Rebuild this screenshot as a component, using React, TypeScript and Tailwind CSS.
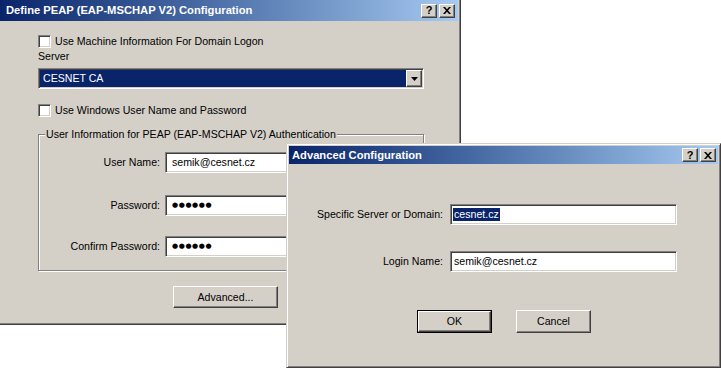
import React from 'react';

const font = "font-['Liberation_Sans',Arial,sans-serif]";
const raised =
  'border border-t-white border-l-white border-r-[#404040] border-b-[#404040] shadow-[inset_-1px_-1px_0_#808080] bg-[#d4d0c8]';
const sunken =
  'border border-t-[#808080] border-l-[#808080] border-r-white border-b-white shadow-[inset_1px_1px_0_#404040,inset_-1px_-1px_0_#d4d0c8]';
const frame =
  'border border-t-[#d4d0c8] border-l-[#d4d0c8] border-r-[#404040] border-b-[#404040] shadow-[inset_1px_1px_0_#fff,inset_-1px_-1px_0_#808080] p-[2px] bg-[#d4d0c8]';

const CaptionButtons: React.FC = () => (
  <div className="flex gap-[2px]">
    <div className={`w-[16px] h-[14px] flex items-center justify-center ${raised}`}>
      <span className="text-[11px] font-bold leading-[11px] text-black">?</span>
    </div>
    <div className={`w-[16px] h-[14px] flex items-center justify-center ${raised}`}>
      <svg width="8" height="7" viewBox="0 0 8 7">
        <path d="M0 0h2l2 2.2L6 0h2L5 3.5 8 7H6L4 4.8 2 7H0l3-3.5z" fill="#000" />
      </svg>
    </div>
  </div>
);

const TitleBar: React.FC<{ title: string; height: string; padL: string; padR: string }> = ({
  title,
  height,
  padL,
  padR,
}) => (
  <div
    className={`flex items-center justify-between bg-gradient-to-r from-[#0a246a] to-[#a6caf0] ${height} ${padL} ${padR}`}
  >
    <span className="text-[11.2px] font-bold text-white leading-[13px]">{title}</span>
    <CaptionButtons />
  </div>
);

const Checkbox: React.FC<{ label: string; className?: string }> = ({ label, className = '' }) => (
  <div className={`flex items-center gap-[4px] h-[13px] ${className}`}>
    <div className={`w-[13px] h-[13px] bg-white ${sunken}`} />
    <span className="leading-[13px]">{label}</span>
  </div>
);

const Dots: React.FC = () => (
  <span className="text-[7px] tracking-[0.6px] leading-[13px] font-['DejaVu_Sans',sans-serif]">●●●●●●</span>
);

const FieldRow: React.FC<{ label: string; className?: string; children: React.ReactNode }> = ({
  label,
  className = '',
  children,
}) => (
  <div className={`flex items-center ${className}`}>
    <div className="w-[121px] text-right leading-[13px]">{label}</div>
    <div className={`ml-[5px] w-[245px] h-[21px] bg-white flex items-center pl-[6px] ${sunken}`}>
      {children}
    </div>
  </div>
);

export default function App() {
  return (
    <div className={`relative w-[721px] h-[369px] overflow-hidden bg-white text-[10.6px] text-black ${font}`}>
      {/* main dialog */}
      <div className={`absolute left-[-3px] top-[-3px] w-[464px] h-[328px] ${frame}`}>
        <TitleBar
          title="Define PEAP (EAP-MSCHAP V2) Configuration"
          height="h-[21px]"
          padL="pl-[6px]"
          padR="pr-[3px]"
        />
        <div className="pl-[38px]">
          <Checkbox label="Use Machine Information For Domain Logon" className="mt-[14px]" />
          <div className="mt-[2px] leading-[13px]">Server</div>
          <div className={`mt-[5px] w-[386px] h-[21px] flex bg-white ${sunken} p-[1px]`}>
            <div className="flex-1 bg-[#0a246a] text-white flex items-center pl-[3px]">CESNET CA</div>
            <div className={`w-[16px] h-full flex items-center justify-center ${raised}`}>
              <svg width="7" height="4" viewBox="0 0 7 4">
                <path d="M0 0h7L3.5 4z" fill="#000" />
              </svg>
            </div>
          </div>
          <Checkbox label="Use Windows User Name and Password" className="mt-[15px]" />

          <div className="relative mt-[17px] w-[386px] border border-[#808080] shadow-[inset_1px_1px_0_#fff,1px_1px_0_#fff] pb-[13px]">
            <span className="absolute left-[6px] top-[-7px] px-[1px] bg-[#d4d0c8] leading-[13px]">
              User Information for PEAP (EAP-MSCHAP V2) Authentication
            </span>
            <FieldRow label="User Name:" className="mt-[17px]">
              <span className="leading-[13px]">semik@cesnet.cz</span>
            </FieldRow>
            <FieldRow label="Password:" className="mt-[22px]">
              <Dots />
            </FieldRow>
            <FieldRow label="Confirm Password:" className="mt-[20px]">
              <Dots />
            </FieldRow>
          </div>

          <button
            className={`mt-[15px] ml-[135px] w-[105px] h-[22px] flex items-center justify-center leading-[13px] ${raised}`}
          >
            Advanced...
          </button>
        </div>
      </div>

      {/* advanced dialog */}
      <div className={`absolute left-[286px] top-[143px] w-[435px] h-[225px] ${frame}`}>
        <TitleBar title="Advanced Configuration" height="h-[18px]" padL="pl-[3px]" padR="pr-[2px]" />
        <div className="flex items-center mt-[40px]">
          <div className="w-[154px] text-right leading-[13px]">Specific Server or Domain:</div>
          <div className={`ml-[7px] w-[227px] h-[21px] bg-white flex items-center pl-[2px] ${sunken}`}>
            <span className="bg-[#0a246a] text-white leading-[13px] px-[1px]">cesnet.cz</span>
          </div>
        </div>
        <div className="flex items-center mt-[26px]">
          <div className="w-[154px] text-right leading-[13px]">Login Name:</div>
          <div className={`ml-[7px] w-[227px] h-[21px] bg-white flex items-center pl-[3px] ${sunken}`}>
            <span className="leading-[13px]">semik@cesnet.cz</span>
          </div>
        </div>
        <div className="flex mt-[38px] ml-[128px] gap-[24px]">
          <div className="w-[75px] h-[23px] border border-black">
            <button className={`w-full h-full flex items-center justify-center leading-[13px] ${raised}`}>OK</button>
          </div>
          <button className={`w-[75px] h-[23px] flex items-center justify-center leading-[13px] ${raised}`}>
            Cancel
          </button>
        </div>
      </div>
    </div>
  );
}
